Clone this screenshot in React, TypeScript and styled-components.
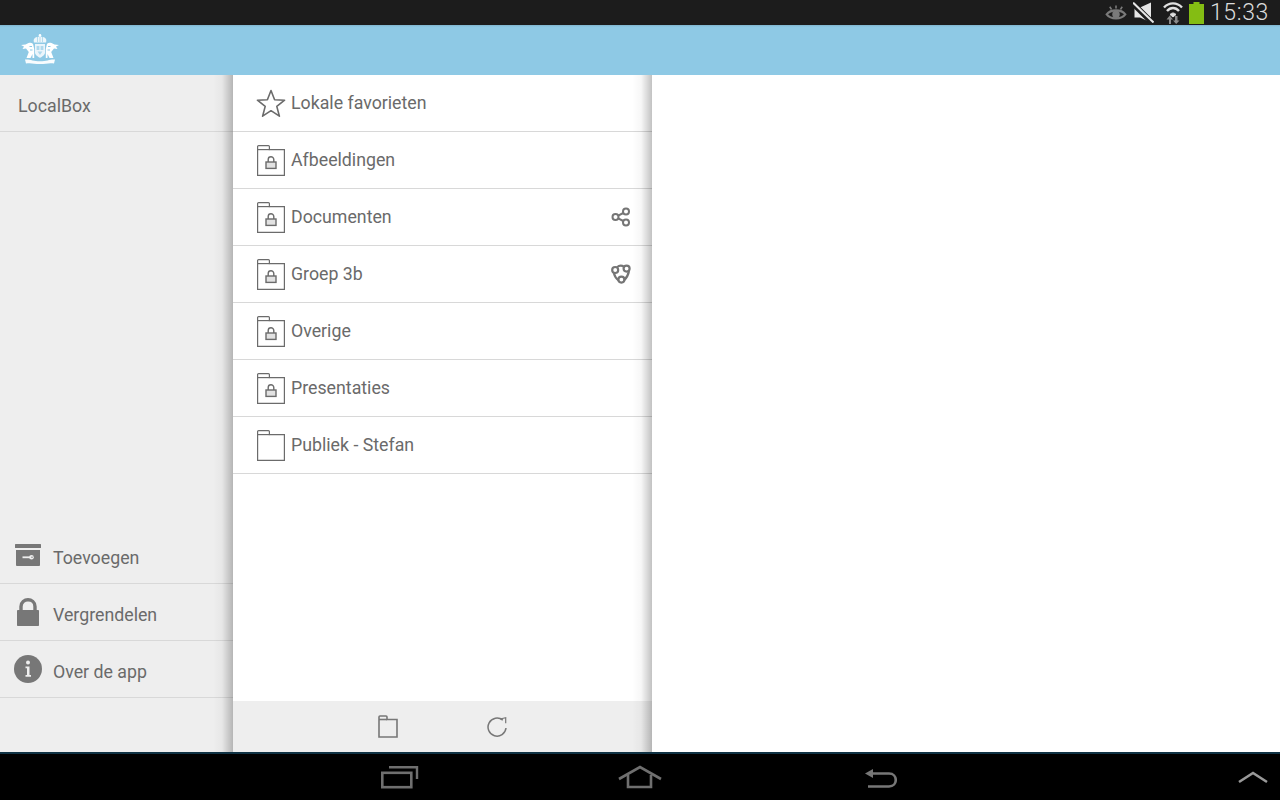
import { createGlobalStyle, styled } from "styled-components";
import type { ReactNode } from "react";

const GlobalStyle = createGlobalStyle`
  html, body {
    margin: 0;
    padding: 0;
    background: #000;
    font-family: Roboto, "Liberation Sans", sans-serif;
  }
  * {
    box-sizing: border-box;
  }
`;

const Screen = styled.div`
  width: 1280px;
  height: 800px;
  display: flex;
  flex-direction: column;
  overflow: hidden;
`;

const StatusBar = styled.div`
  height: 25px;
  flex: none;
  background: #1c1c1c;
  display: flex;
  align-items: center;
  justify-content: flex-end;
  padding-right: 13px;
`;

const StatusIcon = styled.svg<{ $left?: number }>`
  display: block;
  flex: none;
  margin-left: ${(p) => p.$left ?? 0}px;
`;

const Clock = styled.span`
  font-size: 23px;
  font-weight: 300;
  line-height: 25px;
  width: 57px;
  flex: none;
  white-space: nowrap;
  color: #dcdcdc;
  margin-left: 6px;
  letter-spacing: 0.6px;
`;

const Header = styled.div`
  height: 50px;
  flex: none;
  background: linear-gradient(#7fb4cd 0, #8ec9e5 2px);
  display: flex;
  align-items: center;
  padding-left: 21px;
`;

const Main = styled.div`
  flex: 1;
  display: flex;
  min-height: 0;
`;

const Sidebar = styled.div`
  width: 233px;
  flex: none;
  background: #eeeeee;
  display: flex;
  flex-direction: column;
  justify-content: space-between;
  padding-bottom: 54px;
  position: relative;
`;

const Panel = styled.div`
  width: 419px;
  flex: none;
  background: #fff;
  display: flex;
  flex-direction: column;
  position: relative;
`;

const EdgeShadow = styled.div`
  position: absolute;
  top: 0;
  right: 0;
  bottom: 0;
  width: 20px;
  background: linear-gradient(to right, rgba(0, 0, 0, 0), rgba(0, 0, 0, 0.03) 45%, rgba(0, 0, 0, 0.24));
  pointer-events: none;
`;

const Content = styled.div`
  flex: 1;
  background: #fff;
`;

const FolderList = styled.div`
  flex: 1;
`;

const Row = styled.div<{ $inset: number }>`
  height: 57px;
  display: flex;
  align-items: center;
  border-bottom: 1px solid #d8d8d8;
  padding-left: ${(p) => p.$inset}px;
`;

const IconSlot = styled.div<{ $gap: number }>`
  width: 28px;
  flex: none;
  display: flex;
  justify-content: center;
  margin-right: ${(p) => p.$gap}px;
  svg {
    display: block;
    flex: none;
  }
`;

const Label = styled.span<{ $drop: number }>`
  font-size: 17.75px;
  color: #6a6a6a;
  flex: 1;
  margin-top: ${(p) => p.$drop}px;
`;

const Badge = styled.div`
  width: 20px;
  margin-right: 21px;
  flex: none;
  svg {
    display: block;
  }
`;

const PanelFooter = styled.div`
  height: 51px;
  flex: none;
  background: #eeeeee;
  display: flex;
  align-items: center;
  padding-left: 145px;
  gap: 89px;
  svg {
    display: block;
  }
`;

const NavBar = styled.div`
  height: 48px;
  flex: none;
  background: #000;
  border-top: 2px solid #0f3244;
  padding-left: 381px;
  display: grid;
  grid-template-columns: 237px 247px 373px 1fr;
  align-items: center;
`;

const NavIcon = styled.svg<{ $top?: number }>`
  display: block;
  margin-top: ${(p) => p.$top ?? 0}px;
`;

const Eye = () => (
  <StatusIcon width="22" height="16" viewBox="0 0 24 18" fill="none" stroke="#7a7a7a" strokeWidth="2.4">
    <path d="M1.5 10.5 C6 4.5 18 4.5 22.5 10.5 C18 16.5 6 16.5 1.5 10.5Z" />
    <circle cx="12" cy="10.5" r="4.2" fill="#7a7a7a" stroke="none" />
    <path d="M5 2 L7 5 M12 0.5 V4 M19 2 L17 5" strokeWidth="1.8" />
  </StatusIcon>
);

const Muted = () => (
  <StatusIcon $left={6} width="21" height="21" viewBox="0 0 21 21">
    <path d="M1.5 5.5 H7 L18 0.5 V20.5 L7 15.5 H1.5Z" fill="#e6e6e6" />
    <path d="M0 1.5 L20 21.5" stroke="#1c1c1c" strokeWidth="5.5" />
    <path d="M0 0.5 L20.5 20.5" stroke="#e6e6e6" strokeWidth="2" />
  </StatusIcon>
);

const Wifi = () => (
  <StatusIcon $left={9} width="20" height="23" viewBox="0 0 20 23" fill="none">
    <path d="M1 6.5 C6 1 14 1 19 6.5" stroke="#e0e0e0" strokeWidth="2.4" />
    <path d="M4 10 C7.5 6 12.5 6 16 10" stroke="#e0e0e0" strokeWidth="2.4" />
    <path d="M7 13.5 C9 11.5 11 11.5 13 13.5 L10 16Z" fill="#e0e0e0" stroke="#e0e0e0" strokeWidth="1" />
    <path d="M6 23 V18.5 H3.5 L6.8 14.5 L10 18.5 H8 V23Z" fill="#8a8a8a" />
    <path d="M12 15 V19.5 H10 L13.2 23 L16.5 19.5 H14.5 V15Z" fill="#8a8a8a" />
  </StatusIcon>
);

const Battery = () => (
  <StatusIcon $left={6} width="15" height="22" viewBox="0 0 15 22">
    <path d="M4.5 0 H10.5 V2 H15 V22 H0 V2 H4.5Z" fill="#84bd13" />
  </StatusIcon>
);

const Crest = () => (
  <svg width="38" height="32" viewBox="0 0 38 32" fill="#fff">
    <path d="M13 8.5 C11.5 4 15 2.6 19 2.4 C23 2.6 26.5 4 25 8.5Z" opacity="0.85" />
    <path d="M16.5 3 V8 M21.5 3 V8 M19 3 V8" stroke="#8ec9e5" strokeWidth="0.6" />
    <circle cx="19" cy="1.4" r="1.3" />
    <path d="M14 10 H24 V18.5 C24 21 21 22.8 19 23.8 C17 22.8 14 21 14 18.5Z" opacity="0.82" />
    <path d="M15.6 12 H18.4 V16 H15.6Z M19.6 12 H22.4 V16 H19.6Z M16.6 17.5 H21.4 L19 21Z" fill="#8ec9e5" opacity="0.65" />
    <path d="M7.5 9 C10 8 12.5 9 12.5 12 L13.2 15 V24 H11.5 V20 L9.5 24 H5.5 L7.8 18 L5 14.5 L1.5 15 L3 12.5 L0 11 L4.5 10.5Z" />
    <path d="M30.5 9 C28 8 25.5 9 25.5 12 L24.8 15 V24 H26.5 V20 L28.5 24 H32.5 L30.2 18 L33 14.5 L36.5 15 L35 12.5 L38 11 L33.5 10.5Z" />
    <path d="M8.5 12 H11 V13 H8.5Z M27 12 H29.5 V13 H27Z M9 15.5 H11.5 V16.5 H9Z M26.5 15.5 H29 V16.5 H26.5Z" fill="#8ec9e5" />
    <path d="M4 25.5 C9 25 12 27.2 19 27.2 C26 27.2 29 25 34 25.5 L33 29.5 C28 28.5 25 30 19 30 C13 30 10 28.5 5 29.5Z" opacity="0.95" />
  </svg>
);

const Star = () => (
  <svg width="30" height="29" viewBox="0 0 30 29" fill="none" stroke="#6b6b6b" strokeWidth="1.6" strokeLinejoin="round">
    <path d="M15 1.5 L18.6 10.8 L28.6 11.2 L20.8 17.4 L23.4 27.2 L15 21.7 L6.6 27.2 L9.2 17.4 L1.4 11.2 L11.4 10.8Z" />
  </svg>
);

const Folder = ({ locked }: { locked?: boolean }) => (
  <svg width="28" height="31" viewBox="0 0 28 31" fill="none" stroke="#6b6b6b" strokeWidth="1.2">
    <path d="M0.6 30.4 V1.6 C0.6 1 1 0.6 1.6 0.6 H11.4 C12 0.6 12.4 1 12.4 1.6 V4.6 H27.4 V30.4Z" />
    <path d="M0.6 4.6 H12.4" />
    {locked && (
      <>
        <rect x="9" y="17" width="10" height="6.4" fill="#e2e2e2" stroke="#6b6b6b" strokeWidth="1.4" />
        <path d="M11.2 17 V14.5 C11.2 10.8 16.8 10.8 16.8 14.5 V17" strokeWidth="1.4" />
      </>
    )}
  </svg>
);

const Share = () => (
  <svg width="20" height="20" viewBox="0 0 20 20" fill="none" stroke="#757575" strokeWidth="2">
    <circle cx="15" cy="4.5" r="3" />
    <circle cx="4.5" cy="10" r="3" />
    <circle cx="15" cy="15.5" r="3" />
    <path d="M7.2 8.6 L12.3 6 M7.2 11.4 L12.3 14" />
  </svg>
);

const Group = () => (
  <svg width="20" height="20" viewBox="0 0 20 20" fill="none" stroke="#757575" strokeWidth="2.2">
    <circle cx="4.2" cy="6" r="3" />
    <circle cx="15.6" cy="4.6" r="3" />
    <circle cx="10.4" cy="15.6" r="3" />
    <path d="M6 3.2 C8 1.4 10.5 1.2 13 2.6 M2.8 9 C3.6 12 5 14.6 7.6 16.4 M18 7 C17.4 10.5 15.8 13.6 13.2 16.2" />
  </svg>
);

const ArchiveIcon = () => (
  <svg width="26" height="22" viewBox="0 0 26 22" fill="#777">
    <rect x="0" y="0" width="26" height="4" rx="0.5" />
    <path d="M1 6 H25 V21 C25 21.5 24.5 22 24 22 H2 C1.5 22 1 21.5 1 21Z" />
    <rect x="7.5" y="12.4" width="7.5" height="1.8" fill="#eee" />
    <circle cx="16.5" cy="13.3" r="2.3" fill="#eee" />
    <circle cx="17" cy="13.3" r="0.7" fill="#777" />
  </svg>
);

const LockIcon = () => (
  <svg width="22" height="28" viewBox="0 0 22 28" fill="#777">
    <path d="M4 13 V8.5 C4 -0.5 18 -0.5 18 8.5 V13" fill="none" stroke="#777" strokeWidth="3.4" />
    <rect x="0" y="12" width="22" height="16" rx="0.8" />
  </svg>
);

const InfoIcon = () => (
  <svg width="28" height="28" viewBox="0 0 28 28">
    <circle cx="14" cy="14" r="14" fill="#777" />
    <circle cx="14" cy="7.5" r="2" fill="#eee" />
    <path d="M11.5 11.5 H15.5 V20 H17 V21.8 H11.5 V20 H13 V13.3 H11.5Z" fill="#eee" />
  </svg>
);

const NewFolder = () => (
  <svg width="20" height="23" viewBox="0 0 20 23" fill="none" stroke="#777" strokeWidth="1.6">
    <path d="M1 22 V2 C1 1.4 1.4 1 2 1 H8 C8.6 1 9 1.4 9 2 V4.5 H19 V22Z" />
    <path d="M1 4.5 H9" />
  </svg>
);

const Refresh = () => (
  <svg width="20" height="22" viewBox="0 0 20 22" fill="none" stroke="#777" strokeWidth="1.5">
    <path d="M19 12 A9 9 0 1 1 15.8 4.2" />
    <path d="M13 3 L18.7 1.7 V7.2" strokeWidth="1.2" />
  </svg>
);

const Recents = () => (
  <NavIcon width="38" height="24" viewBox="0 0 38 24" fill="none" stroke="#6f6f6f" strokeWidth="2.6">
    <rect x="1.3" y="7.8" width="29" height="14.4" />
    <path d="M8 2.2 H36 V14" strokeWidth="2.4" />
  </NavIcon>
);

const Home = () => (
  <NavIcon width="44" height="24" viewBox="0 0 44 24" fill="none" stroke="#6f6f6f" strokeWidth="2.6">
    <path d="M1 14 L22 2 L43 14" />
    <path d="M10 10 V22 H33 V10" />
  </NavIcon>
);

const Back = () => (
  <NavIcon $top={1} width="32" height="20" viewBox="0 0 32 20" fill="none" stroke="#777" strokeWidth="2.6">
    <path d="M4 5.5 H24 C33 5.5 33 18.5 24 18.5 H3" />
    <path d="M0 5.5 L8 1 V10Z" fill="#777" stroke="none" />
  </NavIcon>
);

const Chevron = () => (
  <NavIcon width="30" height="14" viewBox="0 0 30 14" fill="none" stroke="#999" strokeWidth="2.6">
    <path d="M1 12 L15 3 L29 12" />
  </NavIcon>
);

const folders: { name: string; icon: ReactNode; badge?: ReactNode }[] = [
  { name: "Lokale favorieten", icon: <Star /> },
  { name: "Afbeeldingen", icon: <Folder locked /> },
  { name: "Documenten", icon: <Folder locked />, badge: <Share /> },
  { name: "Groep 3b", icon: <Folder locked />, badge: <Group /> },
  { name: "Overige", icon: <Folder locked /> },
  { name: "Presentaties", icon: <Folder locked /> },
  { name: "Publiek - Stefan", icon: <Folder /> },
];

const actions: { name: string; icon: ReactNode }[] = [
  { name: "Toevoegen", icon: <ArchiveIcon /> },
  { name: "Vergrendelen", icon: <LockIcon /> },
  { name: "Over de app", icon: <InfoIcon /> },
];

const App = () => {
  return (
    <Screen>
      <GlobalStyle />
      <StatusBar>
        <Eye />
        <Muted />
        <Wifi />
        <Battery />
        <Clock>15:33</Clock>
      </StatusBar>
      <Header>
        <Crest />
      </Header>
      <Main>
        <Sidebar>
          <Row $inset={18}>
            <Label $drop={6}>LocalBox</Label>
          </Row>
          <div>
            {actions.map((a) => (
              <Row key={a.name} $inset={14}>
                <IconSlot $gap={11}>{a.icon}</IconSlot>
                <Label $drop={6}>{a.name}</Label>
              </Row>
            ))}
          </div>
          <EdgeShadow />
        </Sidebar>
        <Panel>
          <FolderList>
            {folders.map((f) => (
              <Row key={f.name} $inset={24}>
                <IconSlot $gap={6}>{f.icon}</IconSlot>
                <Label $drop={-1}>{f.name}</Label>
                {f.badge && <Badge>{f.badge}</Badge>}
              </Row>
            ))}
          </FolderList>
          <PanelFooter>
            <NewFolder />
            <Refresh />
          </PanelFooter>
          <EdgeShadow />
        </Panel>
        <Content />
      </Main>
      <NavBar>
        <Recents />
        <Home />
        <Back />
        <Chevron />
      </NavBar>
    </Screen>
  );
};

export default App;
